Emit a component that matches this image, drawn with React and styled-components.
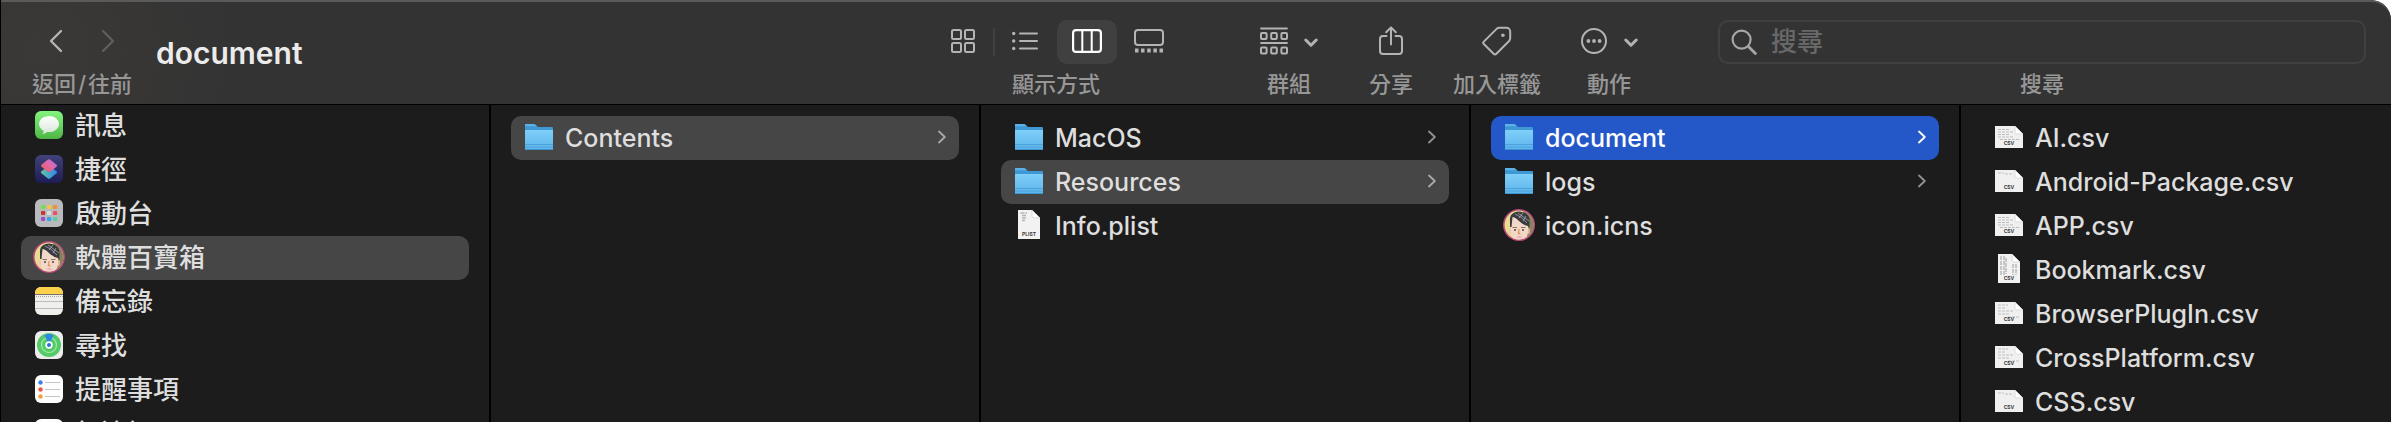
import React from "react";
import styled, { createGlobalStyle, css } from "styled-components";

const Global = createGlobalStyle`
  *, *::before, *::after { box-sizing: border-box; }
  html { background: #fff; }
  body {
    margin: 0;
    font-family: Inter, "Noto Sans CJK TC", sans-serif;
    color: #e0e0e0;
    overflow: hidden;
  }
  button, input { font: inherit; color: inherit; }
  svg { display: block; flex: none; }
`;

/* ---------- window and toolbar ---------- */

const Window = styled.div`
  display: flex;
  flex-direction: column;
  height: 100vh;
  min-height: 300px;
  overflow: hidden;
  background: #1c1c1c;
  border-left: 1px solid #000;
  border-top-right-radius: 20px;
`;

const Toolbar = styled.header`
  display: flex;
  flex: none;
  align-items: stretch;
  padding: 18px 25px 5px 29px;
  border-top: 2px solid #5a5a5a;
  border-bottom: 1px solid #000;
  border-top-right-radius: 20px;
  background: radial-gradient(circle at 40px 50px, #3b3937, #333 200px);
`;

const Title = styled.h1`
  flex: 1;
  min-width: 0;
  margin: 0 0 0 22px;
  padding-bottom: 14px;
  align-self: center;
  font-size: 30px;
  line-height: 36px;
  font-weight: 600;
  color: #ebebeb;
`;

const Tool = styled.div`
  display: flex;
  flex: none;
  flex-direction: column;
  gap: 6px;
  width: ${(p) => p.$width}px;
`;

const SearchTool = styled(Tool)`
  flex: 0 1 648px;
  width: auto;
  margin-left: 69px;
`;

const Controls = styled.div`
  display: flex;
  align-items: center;
  height: 44px;
`;

const Caption = styled.span`
  display: block;
  font-size: 22px;
  line-height: 29px;
  height: 29px;
  font-weight: 500;
  text-align: center;
  white-space: nowrap;
  color: #979797;
`;

const Slash = styled.span`
  margin: 0 2px;
`;

const ToolButton = styled.button`
  display: flex;
  flex: 1;
  align-items: center;
  justify-content: center;
  gap: 16px;
  height: 44px;
  padding: 0 0 2px;
  border: 0;
  border-radius: 10px;
  background: ${(p) => (p.$active ? "#404040" : "transparent")};
  color: ${(p) => (p.$active ? "#fff" : "#b4b4b4")};
  &:disabled { color: #5e5e5e; }
`;

const Views = styled(Controls)`
  gap: 2px;
`;

const FirstView = styled(ToolButton)`
  position: relative;
  &::after {
    content: "";
    position: absolute;
    right: -2px;
    top: 8px;
    width: 2px;
    height: 28px;
    background: #414141;
  }
`;

const Actions = styled.div`
  display: flex;
  gap: 28px;
  margin-left: 70px;
`;

const SearchBox = styled.div`
  display: flex;
  align-items: center;
  gap: 14px;
  height: 44px;
  padding: 0 11px;
  border: 2px solid #404040;
  border-radius: 10px;
  color: #a6a6a6;
`;

const SearchInput = styled.input`
  flex: 1;
  min-width: 0;
  padding: 0;
  border: 0;
  outline: 0;
  background: transparent;
  font-size: 26px;
  line-height: 36px;
  font-weight: 500;
  &::placeholder { color: #686868; opacity: 1; }
`;

/* ---------- browser columns ---------- */

const Browser = styled.main`
  display: grid;
  flex: 1;
  min-height: 0;
  grid-template-columns: repeat(4, minmax(0, 490fr)) minmax(0, 430fr);
`;

const Column = styled.ul`
  margin: 0;
  padding: 11px 20px;
  list-style: none;
  overflow: hidden;
  border-right: 2px solid #000;
  &:last-child { border-right: 0; }
`;

const Sidebar = styled(Column)`
  padding-top: 0;
  & > li:first-child { margin-top: -1px; }
`;

const tones = {
  current: css`background: #464646; --arrow: #a9a9a9;`,
  focus: css`background: #2458c9; color: #fff; --arrow: #fff;`,
};

const Row = styled.button`
  --arrow: #929292;
  display: flex;
  align-items: center;
  gap: 12px;
  width: 100%;
  height: 44px;
  padding: 0 13px 0 12px;
  border: 0;
  border-radius: 10px;
  background: transparent;
  color: #dedede;
  text-align: left;
  ${(p) => tones[p.$tone]}
`;

const IconSlot = styled.span`
  display: flex;
  flex: none;
  justify-content: center;
  width: 32px;
  margin: 0 -2px 2px 0;
`;

const Arrow = styled.span`
  flex: none;
  padding-bottom: 2px;
  color: var(--arrow);
`;

const Name = styled.span`
  flex: 1;
  min-width: 0;
  overflow: hidden;
  font-size: ${(p) => (p.$cjk ? 26 : 25)}px;
  font-weight: 500;
  line-height: 36px;
  white-space: nowrap;
`;

/* ---------- toolbar glyphs ---------- */

const line = { fill: "none", stroke: "currentColor", strokeLinecap: "round", strokeLinejoin: "round" };

const Back = () => (
  <svg width="16" height="24" viewBox="0 0 16 24" {...line} strokeWidth="2.4"><path d="M13 2 3 12 13 22" /></svg>
);
const Forward = () => (
  <svg width="16" height="24" viewBox="0 0 16 24" {...line} strokeWidth="2.4"><path d="M3 2 13 12 3 22" /></svg>
);
const GridGlyph = () => (
  <svg width="24" height="24" viewBox="0 0 24 24" {...line} strokeWidth="2">
    <rect x="1" y="1" width="9" height="9" rx="1.5" /><rect x="14" y="1" width="9" height="9" rx="1.5" />
    <rect x="1" y="14" width="9" height="9" rx="1.5" /><rect x="14" y="14" width="9" height="9" rx="1.5" />
  </svg>
);
const ListGlyph = () => (
  <svg width="26" height="22" viewBox="0 0 26 22" {...line} strokeWidth="2">
    <path d="M8 3.5H25M8 11H25M8 18.5H25" />
    <g fill="currentColor" stroke="none"><circle cx="1.7" cy="3.5" r="1.7" /><circle cx="1.7" cy="11" r="1.7" /><circle cx="1.7" cy="18.5" r="1.7" /></g>
  </svg>
);
const ColumnsGlyph = () => (
  <svg width="30" height="24" viewBox="0 0 30 24" {...line} strokeWidth="2.2">
    <rect x="1.1" y="1.1" width="27.8" height="21.8" rx="3" /><path d="M10.3 2V22M19.7 2V22" strokeWidth="2" />
  </svg>
);
const GalleryGlyph = () => (
  <svg width="30" height="24" viewBox="0 0 30 24" {...line} strokeWidth="2">
    <rect x="1" y="1" width="28" height="15" rx="3" />
    <path fill="currentColor" stroke="none" d="M1 19.5h3.5v4H1zM7 19.5h3.5v4H7zM13.2 19.5h3.5v4h-3.5zM19.4 19.5h3.5v4h-3.5zM25.5 19.5H29v4h-3.5z" />
  </svg>
);
const GroupGlyph = () => (
  <svg width="28" height="28" viewBox="0 0 28 28" {...line} strokeWidth="2">
    <path d="M1 1.5H27M1 16H27" strokeWidth="1.8" />
    <rect x="1" y="6" width="5.6" height="6" rx="1" /><rect x="11.2" y="6" width="5.6" height="6" rx="1" /><rect x="21.4" y="6" width="5.6" height="6" rx="1" />
    <rect x="1" y="20.5" width="5.6" height="6" rx="1" /><rect x="11.2" y="20.5" width="5.6" height="6" rx="1" /><rect x="21.4" y="20.5" width="5.6" height="6" rx="1" />
  </svg>
);
const DownGlyph = () => (
  <svg width="14" height="14" viewBox="0 0 14 14" {...line} strokeWidth="3"><path d="M1.8 6 7 11.2 12.2 6" /></svg>
);
const ShareGlyph = () => (
  <svg width="24" height="30" viewBox="0 0 24 30" {...line} strokeWidth="2">
    <path d="M7.5 10H4a3 3 0 0 0-3 3v12a3 3 0 0 0 3 3h16a3 3 0 0 0 3-3V13a3 3 0 0 0-3-3h-3.5M12 18.5V2M7.2 6.2 12 1.4l4.8 4.8" />
  </svg>
);
const TagGlyph = () => (
  <svg width="30" height="30" viewBox="0 0 30 30" {...line} strokeWidth="2">
    <path d="M1.8 15.6 14.6 2.9A4 4 0 0 1 17.4 1.8H24.5a3.7 3.7 0 0 1 3.7 3.7v6.8a4 4 0 0 1-1.1 2.7L14.4 27.7a2 2 0 0 1-2.8 0L1.8 18a1.7 1.7 0 0 1 0-2.4Z" />
    <circle cx="20.9" cy="9.2" r="1.8" fill="currentColor" stroke="none" />
  </svg>
);
const MoreGlyph = () => (
  <svg width="28" height="28" viewBox="0 0 28 28" {...line} strokeWidth="2">
    <circle cx="14" cy="14" r="12" />
    <g fill="currentColor" stroke="none"><circle cx="8.4" cy="14" r="1.9" /><circle cx="14" cy="14" r="1.9" /><circle cx="19.6" cy="14" r="1.9" /></g>
  </svg>
);
const SearchGlyph = () => (
  <svg width="26" height="26" viewBox="0 0 26 26" {...line} strokeWidth="2.2">
    <circle cx="10.6" cy="10.6" r="9" /><path d="m17.4 17.4 7 7" strokeWidth="2.8" />
  </svg>
);
const Disclosure = () => (
  <svg width="8" height="14" viewBox="0 0 8 14" {...line} strokeWidth="1.8"><path d="M1 1.5 6.8 7 1 12.5" /></svg>
);

/* ---------- file and app icons ---------- */

const FolderIcon = () => (
  <svg width="28" height="30" viewBox="0 0 28 30">
    <defs>
      <linearGradient id="folder" x1="0" y1="0" x2="0" y2="1"><stop offset="0" stopColor="#7fd0f9" /><stop offset="1" stopColor="#5cb3ea" /></linearGradient>
    </defs>
    <path d="M0 2.5Q0 2 .5 2H8.6Q9.6 2 10.4 2.8L12 4.3Q12.8 5 14 5H27Q28 5 28 6V12H0Z" fill="#3f97d3" />
    <path d="M0 2.5Q0 2 .5 2H8.6Q9.6 2 10.4 2.8L12 4.3H0Z" fill="#5cb1e6" />
    <path d="M0 8.3Q0 8 .5 8H27.5Q28 8 28 8.3V27Q28 28 27 28H1Q0 28 0 27Z" fill="url(#folder)" />
    <path d="M0 22.5H28M0 25H28" stroke="#4da2dd" strokeWidth="1" />
    <path d="M.5 27.5H27.5" stroke="#3f93cf" strokeWidth="1" />
  </svg>
);

const sheetLines = {
  full: "M3 3.5H15M3 6H19M3 8.5H14M3 11H19M5 13.5H24",
  top: "M3 3H9M10 4H17",
  mid: "M3 3H13M3 6H11M3 9H18M3 12H14M13 15H24",
};

const CsvIcon = ({ lines = "full" }) => (
  <svg width="28" height="24" viewBox="0 0 28 24">
    <path d="M0 1H20L28 9V23H0Z" fill="#f0f0f0" />
    <path d={sheetLines[lines]} transform="translate(0 1)" stroke="#bdbdbd" strokeWidth="1.2" strokeDasharray="3 1" />
    <path d="M20 1 28 9H22Q20 9 20 7Z" fill="#fff" stroke="#c9c9c9" strokeWidth=".6" />
    <text x="14" y="20" textAnchor="middle" fontFamily="Inter, sans-serif" fontSize="5" fontWeight="700" fill="#3c3c3c">CSV</text>
  </svg>
);

const PageIcon = ({ label, lines }) => (
  <svg width="22" height="30" viewBox="0 0 22 30">
    <path d="M0 0H14L22 8V29H0Z" fill="#f2f2f2" />
    <path d={lines} stroke="#b4b4b4" strokeWidth="1.4" strokeDasharray="4 1" />
    <path d="M14 0 22 8H16Q14 8 14 6Z" fill="#fff" stroke="#c4c4c4" strokeWidth=".6" />
    <text x="11" y="26" textAnchor="middle" fontFamily="Inter, sans-serif" fontSize="5" fontWeight="700" fill="#3c3c3c">{label}</text>
  </svg>
);
const PlistIcon = () => <PageIcon label="PLIST" lines="M2.5 3H9M4 5.5H8M4 8H9M4 10.5H7" />;
const BookmarkIcon = () => <PageIcon label="CSV" lines="M3 2V21M6 2V21M8 4V20M15 10V21M18 10V21" />;

const FaceIcon = () => (
  <svg width="32" height="32" viewBox="0 0 32 32">
    <defs><clipPath id="face"><circle cx="16" cy="16" r="14.4" /></clipPath></defs>
    <circle cx="16" cy="16" r="16" fill="#b8487c" />
    <g clipPath="url(#face)">
      <rect width="32" height="32" fill="#e9dc8c" />
      <path d="M20 0H32V32H21Z" fill="#86845a" />
      <ellipse cx="7.4" cy="22" rx="1.8" ry="3" fill="#edc9b5" /><ellipse cx="25.4" cy="22" rx="1.6" ry="3" fill="#e0b8a2" />
      <path d="M8 9Q9 4 16 4 24 5 25 12V22Q25 28 21 31H12Q8 28 8 22Z" fill="#f3d8c8" />
      <path d="M7 18V9Q8 3 16 2.5Q25 3 26.500 10V19L25 17Q20 16 16 12Q12 8 9.500 8L8.500 18Z" fill="#3a3b41" />
      <path d="M12 5Q18 7 24 14M15 4 26 12M20 4 16 9M23 7 20 12" stroke="#a9acb2" strokeWidth=".8" fill="none" />
      <path d="M9.500 18.500H14M18 18.500H22.500" stroke="#8a7468" strokeWidth="1" />
      <circle cx="12" cy="21" r="1" fill="#4d4643" /><circle cx="20" cy="21" r="1" fill="#4d4643" />
      <path d="M16 20V24L17.500 25H15Z" fill="#e2925e" stroke="#e2925e" strokeWidth=".7" />
      <path d="M13 28Q16 26.500 20 28 16 30 13 28Z" fill="#e9a9ba" />
    </g>
  </svg>
);

const MessagesIcon = () => (
  <svg width="28" height="28" viewBox="0 0 28 28">
    <defs>
      <linearGradient id="msg" x1="0" y1="0" x2="0" y2="1"><stop offset="0" stopColor="#85f57f" /><stop offset="1" stopColor="#4eb645" /></linearGradient>
      <linearGradient id="bubble" x1="0" y1="0" x2="0" y2="1"><stop offset="0" stopColor="#fff" /><stop offset="1" stopColor="#d6e6d5" /></linearGradient>
    </defs>
    <rect width="28" height="28" rx="6" fill="url(#msg)" />
    <path d="M14 5C8.500 5 4 8.600 4 13c0 2.800 1.800 5.300 4.600 6.700 0 1.300-.6 2.400-1.400 3.300 1.900-.1 3.600-.8 4.800-2 .7.1 1.300.1 2 .1 5.500 0 10-3.600 10-8.100S19.500 5 14 5Z" fill="url(#bubble)" />
  </svg>
);
const ShortcutsIcon = () => (
  <svg width="28" height="28" viewBox="0 0 28 28">
    <defs>
      <linearGradient id="sc" x1="0" y1="0" x2="0" y2="1"><stop offset="0" stopColor="#42427a" /><stop offset="1" stopColor="#1c1c58" /></linearGradient>
      <linearGradient id="scTop" x1="0" y1="1" x2="1" y2="0"><stop offset="0" stopColor="#f05a50" /><stop offset=".5" stopColor="#e268a2" /><stop offset="1" stopColor="#b46cf0" /></linearGradient>
      <linearGradient id="scLow" x1="0" y1="0" x2="1" y2="0"><stop offset="0" stopColor="#62c7a0" /><stop offset="1" stopColor="#2d83f2" /></linearGradient>
    </defs>
    <rect width="28" height="28" rx="6" fill="url(#sc)" />
    <path d="M12.600 11.600Q14 10.800 15.400 11.600L21.500 16.300Q22.500 17.300 21.500 18.300L15.400 23.300Q14 24.400 12.600 23.300L6.500 18.300Q5.500 17.300 6.500 16.300Z" fill="url(#scLow)" />
    <path d="M12.600 4.700Q14 3.600 15.400 4.700L21.500 9.700Q22.500 10.700 21.500 11.700L15.400 16.400Q14 17.400 12.600 16.400L6.500 11.700Q5.500 10.700 6.500 9.700Z" fill="url(#scTop)" />
  </svg>
);
const launchColors = ["#6fe04c", "#f5c53d", "#f0913a", "#c8352c", "#d5dce2", "#ee4f63", "#9a4fd0", "#37a3ec", "#57cfa6"];
const LaunchpadIcon = () => (
  <svg width="28" height="28" viewBox="0 0 28 28">
    <rect width="28" height="28" rx="6" fill="#b9babb" />
    {launchColors.map((c, i) => (
      <rect key={i} x={6 + (i % 3) * 6} y={6 + Math.floor(i / 3) * 6} width="4.2" height="4" rx="1" fill={c} />
    ))}
  </svg>
);
const NotesIcon = () => (
  <svg width="28" height="28" viewBox="0 0 28 28">
    <defs><clipPath id="notes"><rect width="28" height="28" rx="6" /></clipPath></defs>
    <g clipPath="url(#notes)">
      <rect width="28" height="28" fill="#efefec" />
      <rect width="28" height="7" fill="#fbd04a" />
      <path d="M0 7.500H28" stroke="#77716a" />
      <path d="M1 9.500H28" stroke="#a8a7a4" strokeDasharray="1 1" />
      <path d="M0 14.500H28M0 21.500H28" stroke="#bcbcc0" />
    </g>
  </svg>
);
const FindMyIcon = () => (
  <svg width="28" height="28" viewBox="0 0 28 28">
    <rect width="28" height="28" rx="6" fill="#ececec" />
    <circle cx="14" cy="14" r="12" fill="#54cb67" />
    <circle cx="14" cy="14" r="7.500" fill="none" stroke="#a4eaab" strokeWidth="1.200" />
    <path d="M14 14 9.500 4.200Q14 1.800 18.500 4.200Z" fill="#2f86e8" />
    <circle cx="14" cy="14" r="3.700" fill="#fff" /><circle cx="14" cy="14" r="2" fill="#2a6fe0" />
  </svg>
);
const RemindersIcon = () => (
  <svg width="28" height="28" viewBox="0 0 28 28">
    <rect width="28" height="28" rx="6" fill="#fdfdfd" />
    {["#3b82f0", "#ea5545", "#f29f38"].map((c, i) => (
      <g key={c}>
        <circle cx="5.500" cy={7.500 + i * 7} r="2" fill={c} stroke={c} strokeOpacity=".5" />
        <path d={`M10 ${7.500 + i * 7}H25`} stroke="#c4c4c6" />
      </g>
    ))}
  </svg>
);
const FreeformIcon = () => (
  <svg width="28" height="28" viewBox="0 0 28 28">
    <rect width="28" height="28" rx="6" fill="#fdfdfd" />
    <path d="M5 20Q9 8 14 16T23 10" fill="none" stroke="#3b9cf0" strokeWidth="2.500" />
  </svg>
);

/* ---------- data ---------- */

const sidebar = [
  { name: "訊息", icon: MessagesIcon },
  { name: "捷徑", icon: ShortcutsIcon },
  { name: "啟動台", icon: LaunchpadIcon },
  { name: "軟體百寶箱", icon: FaceIcon, tone: "current" },
  { name: "備忘錄", icon: NotesIcon },
  { name: "尋找", icon: FindMyIcon },
  { name: "提醒事項", icon: RemindersIcon },
  { name: "無邊記", icon: FreeformIcon },
];

const columns = [
  [{ name: "Contents", icon: FolderIcon, tone: "current", open: true }],
  [
    { name: "MacOS", icon: FolderIcon, open: true },
    { name: "Resources", icon: FolderIcon, tone: "current", open: true },
    { name: "Info.plist", icon: PlistIcon },
  ],
  [
    { name: "document", icon: FolderIcon, tone: "focus", open: true },
    { name: "logs", icon: FolderIcon, open: true },
    { name: "icon.icns", icon: FaceIcon },
  ],
  [
    { name: "AI.csv", icon: CsvIcon, lines: "full" },
    { name: "Android-Package.csv", icon: CsvIcon, lines: "top" },
    { name: "APP.csv", icon: CsvIcon, lines: "full" },
    { name: "Bookmark.csv", icon: BookmarkIcon },
    { name: "BrowserPlugIn.csv", icon: CsvIcon, lines: "mid" },
    { name: "CrossPlatform.csv", icon: CsvIcon, lines: "mid" },
    { name: "CSS.csv", icon: CsvIcon, lines: "top" },
  ],
];

function Item({ item, cjk }) {
  const Icon = item.icon;
  return (
    <li>
      <Row type="button" $tone={item.tone}>
        <IconSlot><Icon lines={item.lines} /></IconSlot>
        <Name $cjk={cjk}>{item.name}</Name>
        {item.open && <Arrow><Disclosure /></Arrow>}
      </Row>
    </li>
  );
}

export default function App() {
  return (
    <>
      <Global />
      <Window>
        <Toolbar>
          <Tool $width={104}>
            <Controls>
              <ToolButton type="button" aria-label="返回"><Back /></ToolButton>
              <ToolButton type="button" aria-label="往前" disabled><Forward /></ToolButton>
            </Controls>
            <Caption>返回<Slash>/</Slash>往前</Caption>
          </Tool>
          <Title>document</Title>
          <Tool $width={246}>
            <Views>
              <FirstView type="button" aria-label="圖像"><GridGlyph /></FirstView>
              <ToolButton type="button" aria-label="列表"><ListGlyph /></ToolButton>
              <ToolButton type="button" aria-label="直欄" aria-pressed="true" $active><ColumnsGlyph /></ToolButton>
              <ToolButton type="button" aria-label="圖庫"><GalleryGlyph /></ToolButton>
            </Views>
            <Caption>顯示方式</Caption>
          </Tool>
          <Actions>
            <Tool $width={80}>
              <ToolButton type="button" aria-label="群組"><GroupGlyph /><DownGlyph /></ToolButton>
              <Caption>群組</Caption>
            </Tool>
            <Tool $width={68}>
              <ToolButton type="button" aria-label="分享"><ShareGlyph /></ToolButton>
              <Caption>分享</Caption>
            </Tool>
            <Tool $width={88}>
              <ToolButton type="button" aria-label="加入標籤"><TagGlyph /></ToolButton>
              <Caption>加入標籤</Caption>
            </Tool>
            <Tool $width={80}>
              <ToolButton type="button" aria-label="動作"><MoreGlyph /><DownGlyph /></ToolButton>
              <Caption>動作</Caption>
            </Tool>
          </Actions>
          <SearchTool>
            <SearchBox>
              <SearchGlyph />
              <SearchInput id="search" type="text" placeholder="搜尋" />
            </SearchBox>
            <Caption as="label" htmlFor="search">搜尋</Caption>
          </SearchTool>
        </Toolbar>
        <Browser>
          <Sidebar>
            {sidebar.map((item) => <Item key={item.name} item={item} cjk />)}
          </Sidebar>
          {columns.map((items, i) => (
            <Column key={i}>
              {items.map((item) => <Item key={item.name} item={item} />)}
            </Column>
          ))}
        </Browser>
      </Window>
    </>
  );
}
